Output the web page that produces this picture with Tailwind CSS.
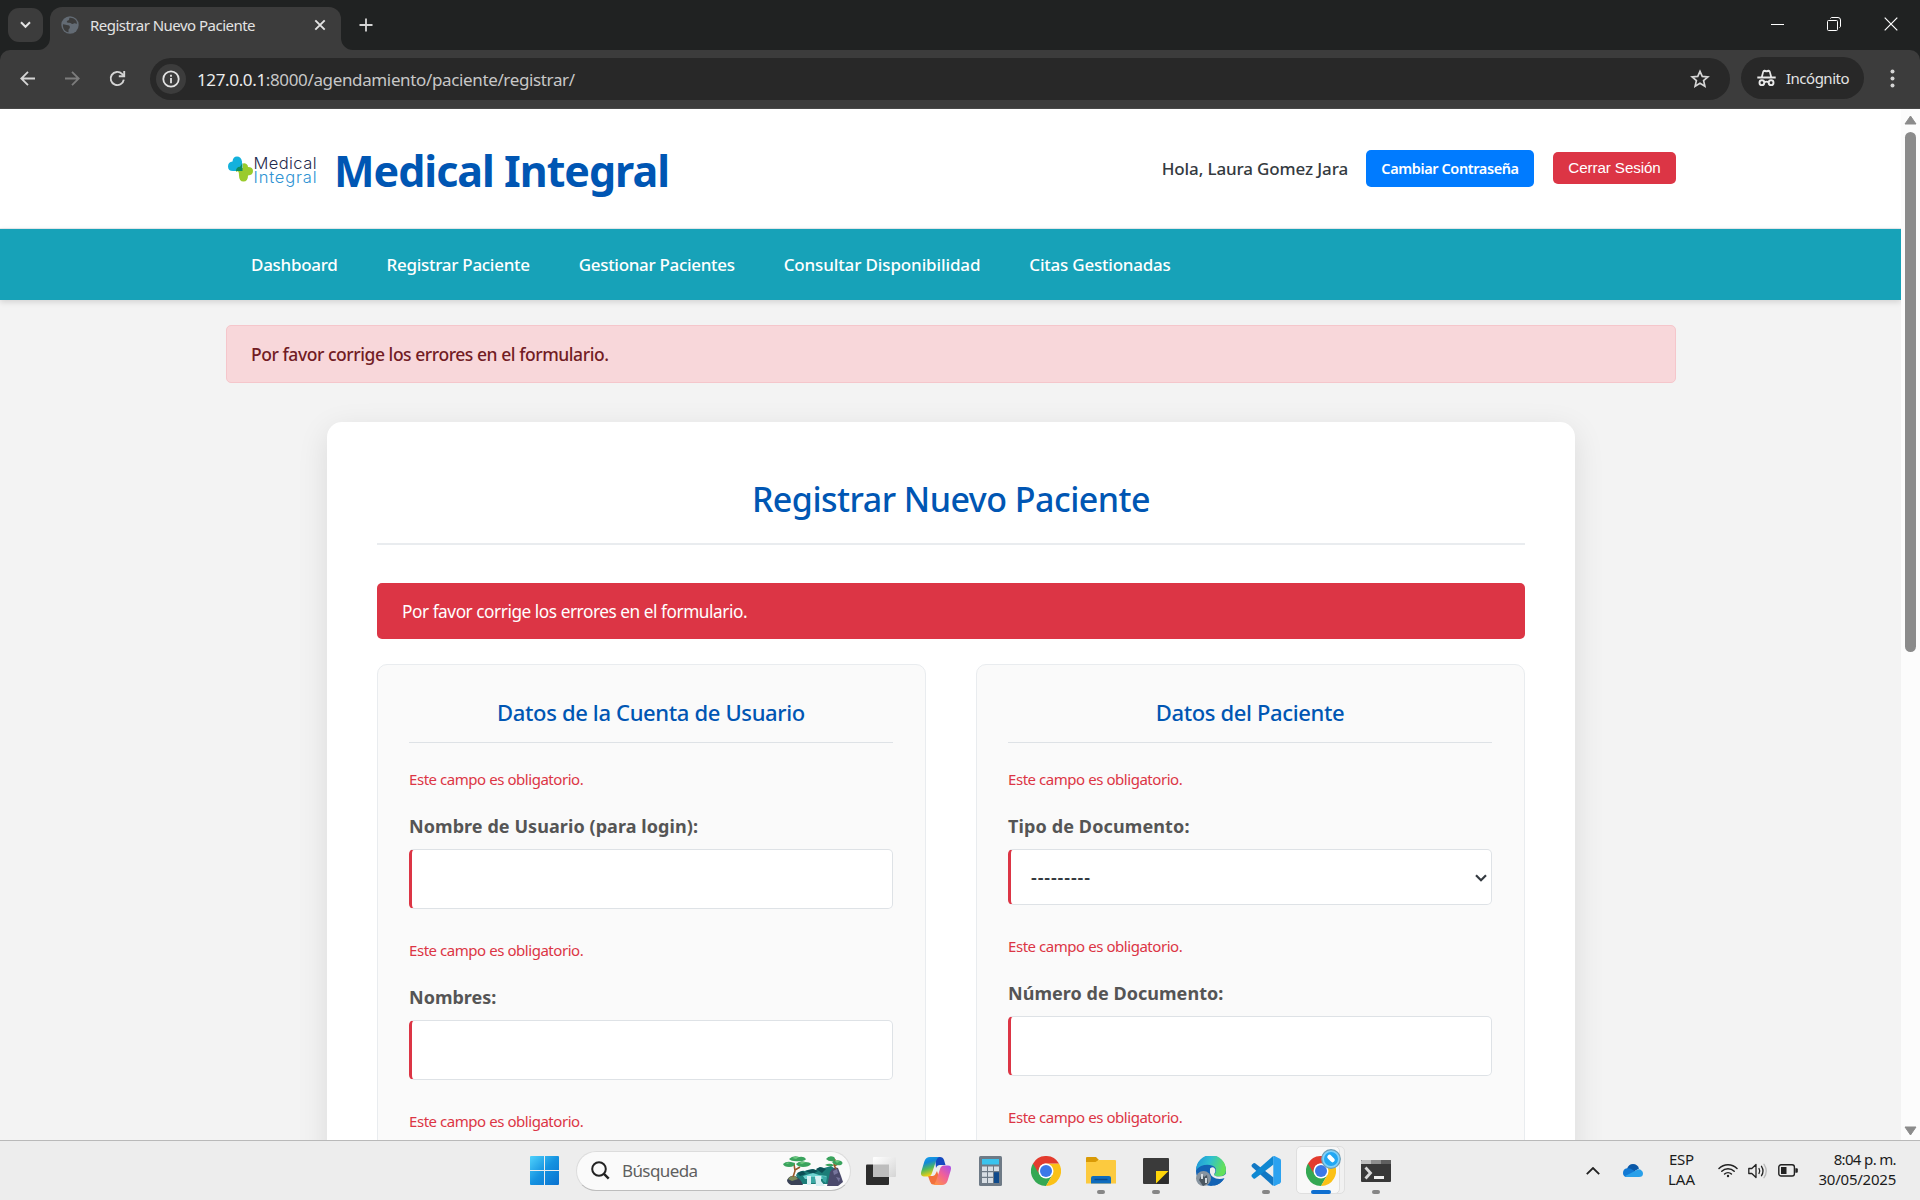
<!DOCTYPE html>
<html lang="es">
<head>
<meta charset="utf-8">
<title>Registrar Nuevo Paciente</title>
<script src="https://cdn.jsdelivr.net/npm/@tailwindcss/browser@4"></script>
</head>
<body class="flex h-[1200px] w-[1920px] flex-col overflow-hidden bg-[#f3f3f3] font-['Noto_Sans','Open_Sans',sans-serif]">

<!-- shared symbols -->
<svg class="hidden">
  <symbol id="chrome" viewBox="0 0 48 48">
    <path fill="#34a853" d="M24 24 3.2 12A24 24 0 0 0 24 48l10.4-18z"/>
    <path fill="#fbc116" d="M24 48A24 24 0 0 0 44.8 12H24l10.4 18z"/>
    <path fill="#e33b2e" d="M3.2 12A24 24 0 0 1 44.8 12H24a12 12 0 0 0-10.4 18z"/>
    <circle cx="24" cy="24" r="12" fill="#fff"/>
    <circle cx="24" cy="24" r="9.6" fill="#3b78e7"/>
  </symbol>
</svg>

<!-- tab strip -->
<header class="flex h-[50px] shrink-0 items-start bg-[#202222] text-[#e3e3e3]">
  <div class="mt-2 ml-2 grid h-[34px] w-[35px] place-items-center rounded-[11px] bg-[#3c3c3c]">
    <svg width="11" height="8" viewBox="0 0 11 8" fill="none" stroke="#e3e3e3" stroke-width="2"><path d="M1 1.2 5.5 5.8 10 1.2"/></svg>
  </div>
  <div class="relative mt-[7px] ml-[7px] flex h-[43px] w-[291px] rounded-t-[12px] bg-[#3c3c3c]">
    <svg class="absolute bottom-0 -left-3" width="12" height="12"><path fill="#3c3c3c" d="M12 0v12H0A12 12 0 0 0 12 0z"/></svg>
    <svg class="absolute -right-3 bottom-0" width="12" height="12"><path fill="#3c3c3c" d="M0 0v12h12A12 12 0 0 1 0 0z"/></svg>
    <svg class="mt-[9px] ml-[11px]" width="18" height="18" viewBox="0 0 18 18"><circle cx="9" cy="9" r="8.7" fill="#636b74"/><path fill="#3c3c3c" d="M2 8.2c2.500 0 3 .8 5 1 1.700.2 2 1.200 1.800 2.600-.2 1-1.200 1.200-1.300 2.200v2.300C3.500 15.500 1.500 12 2 8.200zM8.500 1.800c-.6 1 .2 1.700-.8 2.400-1 .6-2 .3-1.900 1.600.1 1.100 1.400 1 2.700 1 1.200 0 1.700.9 2.800 1.200 1.200.2 1.900-.8 3-.6l1.700.4c0-3-2.500-6.300-7.500-6z"/></svg>
    <div class="ml-[11px] w-[215px] text-[15px] leading-9 tracking-[-0.52px] whitespace-nowrap">Registrar Nuevo Paciente</div>
    <svg class="mt-[12px] ml-[9px]" width="12" height="12" viewBox="0 0 12 12" stroke="#e3e3e3" stroke-width="1.900"><path d="M1.300 1.300l9.400 9.400M10.700 1.300l-9.400 9.400"/></svg>
  </div>
  <svg class="mt-[18px] ml-[18px]" width="14" height="14" viewBox="0 0 14 14" stroke="#d5d5d5" stroke-width="1.800"><path d="M7 .5v13M.5 7h13"/></svg>
  <div class="mt-[17px] mr-[22px] ml-auto flex items-center gap-[43px]">
    <div class="h-px w-[13px] bg-white"></div>
    <svg width="14" height="14" viewBox="0 0 14 14" fill="none" stroke="#fff"><rect x=".5" y="3.500" width="10" height="10" rx="1"/><path d="M3.500 1.500a1.500 1.500 0 0 1 1-1H11A2.500 2.500 0 0 1 13.500 3v6.500a1.500 1.500 0 0 1-1 1"/></svg>
    <svg width="14" height="14" viewBox="0 0 14 14" stroke="#fff" stroke-width="1.200"><path d="M.7.7l12.600 12.600M13.300.7.7 13.300"/></svg>
  </div>
</header>

<!-- toolbar -->
<div class="h-[59px] shrink-0 bg-[#202222]">
  <div class="flex h-full items-start rounded-t-[10px] border-b border-[#484848] bg-[#3c3c3c]">
    <svg class="mt-[21px] ml-5" width="15" height="15" viewBox="0 0 15 15" fill="none" stroke="#d5d5d5" stroke-width="1.800"><path d="M15 7.500H1.500M8 .8 1.300 7.500 8 14.200"/></svg>
    <svg class="mt-[21px] ml-[30px]" width="15" height="15" viewBox="0 0 15 15" fill="none" stroke="#7c7c7c" stroke-width="1.800"><path d="M0 7.500h13.500M7 .8l6.700 6.700L7 14.200"/></svg>
    <svg class="mt-[20px] ml-[29px]" width="17" height="17" viewBox="0 0 17 17" fill="none" stroke="#d5d5d5" stroke-width="1.900"><path d="M14.800 9.600A6.600 6.600 0 1 1 13 3.900L15 6"/><path d="M15.200 1v5.300H9.800"/></svg>
    <div class="mt-2 ml-[24px] flex h-[42px] w-[1580px] items-center rounded-full bg-[#282828] pr-[20px] pl-[6px]">
      <div class="grid size-[30px] place-items-center rounded-full bg-[#3c3c3c]">
        <svg width="18" height="18" viewBox="0 0 18 18" fill="none" stroke="#e3e3e3" stroke-width="1.800"><circle cx="9" cy="9" r="7.700"/><path d="M9 8v5.200M9 4.800v1.900"/></svg>
      </div>
      <div class="mt-0.5 ml-[11px] text-[17px] leading-10 tracking-[-0.36px] whitespace-nowrap text-[#c7c7c7]"><span class="text-[#ececec]">127.0.0.1</span>:8000/agendamiento/paciente/registrar/</div>
      <svg class="ml-auto" width="20" height="20" viewBox="0 0 20 20" fill="none" stroke="#d5d5d5" stroke-width="1.700"><path d="M10 2.300l2.250 5.150 5.600.5-4.250 3.700 1.270 5.500L10 14.250l-4.870 2.900 1.270-5.500-4.250-3.700 5.600-.5z"/></svg>
    </div>
    <div class="mt-[7px] ml-[11px] flex h-[42px] w-[123px] items-center rounded-full bg-[#282828] pl-[16px]">
      <svg width="19" height="18" viewBox="0 0 19 18"><path fill="#e8e8e8" d="M4 7.500 5.500 2.200Q6 .4 7.800.7l1.700.5 1.700-.5Q13 .4 13.500 2.200L15 7.500h-1.900L12 2.900l-2.500.4L7 2.900 5.900 7.500zM.3 7.400h18.400v2.200H.3z"/><g fill="none" stroke="#e8e8e8" stroke-width="1.900"><circle cx="4.900" cy="13.700" r="2.400"/><circle cx="14.100" cy="13.700" r="2.400"/><path d="M7.200 13.300q2.300-1.300 4.600 0"/></g></svg>
      <span class="ml-[10px] text-[15px] tracking-[-0.5px] text-[#e3e3e3]">Incógnito</span>
    </div>
    <svg class="mt-[19px] ml-[26px]" width="5" height="19" fill="#d5d5d5"><circle cx="2.500" cy="2.500" r="2"/><circle cx="2.500" cy="9.500" r="2"/><circle cx="2.500" cy="16.500" r="2"/></svg>
  </div>
</div>

<!-- viewport -->
<div class="flex h-[1031px] shrink-0 overflow-hidden">
  <div class="w-[1901px] overflow-hidden bg-[#f3f3f3]">
    <div class="h-[120px] border-b border-[#e9ecef] bg-white px-[226px]">
      <div class="flex h-[119px] w-[1450px] items-center">
        <svg class="mt-0.5 ml-px" width="92" height="34" viewBox="0 0 92 34">
          <path fill="#9acb2c" d="M9 15h7V10.500a3.700 3.700 0 0 1 5 3.500q5 0 5 4t-5 4.500q0 6-4.500 6T12 22.500 9 19z"/>
          <path fill="#14b1dc" d="M5.500 8.500Q6 3.500 10 3.500t5 5v4.500q0 5-5 5H6q-5 0-5-4.500t4.500-5z"/>
          <path fill="#0e8f5f" d="M9 18q0-4 4-4.200L15.500 10v8z"/>
          <text x="26.500" y="15.800" textLength="63" font-family="Inter" font-weight="300" font-size="16.500" fill="#1f2a4d">Medical</text>
          <text x="26.500" y="30.300" textLength="63" font-family="Inter" font-weight="300" font-size="16.500" fill="#2e93d3">Integral</text>
        </svg>
        <h1 class="mt-1 ml-[15px] text-[43px] leading-[60px] font-bold tracking-[-1.02px] whitespace-nowrap text-[#0056b3]">Medical Integral</h1>
        <div class="ml-auto flex items-center">
          <span class="text-[17px] font-medium tracking-[-0.13px] whitespace-nowrap text-[#343a40]">Hola, Laura Gomez Jara</span>
          <div class="ml-[18px] h-[37px] w-[168px] rounded-[5px] bg-[#007bff] text-center text-[14.500px] leading-[37px] font-semibold tracking-[-0.4px] whitespace-nowrap text-white">Cambiar Contraseña</div>
          <div class="mb-0.5 ml-[19px] h-[32px] w-[123px] rounded-[5px] bg-[#dc3545] text-center font-['Liberation_Sans',sans-serif] text-[15.200px] leading-8 tracking-[-0.1px] whitespace-nowrap text-white">Cerrar Sesión</div>
        </div>
      </div>
    </div>
    <nav class="relative flex h-[71px] items-center gap-[49px] bg-[#17a2b8] pl-[251px] text-[17px] font-medium whitespace-nowrap text-white shadow-[0_2px_6px_rgba(0,0,0,0.14)]">
      <a class="tracking-[-0.28px]">Dashboard</a>
      <a class="tracking-[-0.29px]">Registrar Paciente</a>
      <a class="tracking-[-0.31px]">Gestionar Pacientes</a>
      <a class="tracking-[-0.13px]">Consultar Disponibilidad</a>
      <a class="tracking-[-0.22px]">Citas Gestionadas</a>
    </nav>
    <div class="mt-[25px] ml-[226px] h-[58px] w-[1450px] rounded-[5px] border border-[#f5c6cb] bg-[#f8d7da] pl-[24px] text-[17.500px] leading-[57px] font-medium tracking-[-0.45px] text-[#721c24]">Por favor corrige los errores en el formulario.</div>

    <main class="mt-[39px] ml-[327px] h-[900px] w-[1248px] rounded-[15px] bg-white px-[50px] pt-[53px] shadow-[0_8px_31px_rgba(0,0,0,0.1)]">
      <h2 class="h-[70px] border-b-2 border-[#e9ecef] text-center text-[34px] leading-[48px] font-medium tracking-[-0.52px] text-[#0056b3]">Registrar Nuevo Paciente</h2>
      <div class="mt-[38px] h-[56px] rounded-[5px] bg-[#dc3545] pl-[25px] text-[17.250px] leading-[58px] tracking-[-0.46px] text-white">Por favor corrige los errores en el formulario.</div>
      <div class="mt-[25px] grid grid-cols-2 gap-[50px]">
        <section class="h-[600px] rounded-[10px] border border-[#e9ecef] bg-[#fafafa] pt-[31px] pr-8 pl-[31px]">
          <h3 class="h-[47px] border-b border-[#dee2e6] text-center text-[22px] leading-8 font-medium tracking-[-0.35px] text-[#0056b3]">Datos de la Cuenta de Usuario</h3>
          <p class="mt-[26px] text-[15px] leading-5 tracking-[-0.45px] text-[#dc3545]">Este campo es obligatorio.</p>
          <label class="mt-[27px] block text-[18px] leading-5 font-bold tracking-[0.07px] text-[#555]">Nombre de Usuario (para login):</label>
          <div class="mt-[13px] h-[60px] rounded-[5px] border border-l-3 border-[#dee2e6] border-l-[#dc3545] bg-white"></div>
          <p class="mt-[31px] text-[15px] leading-5 tracking-[-0.45px] text-[#dc3545]">Este campo es obligatorio.</p>
          <label class="mt-[27px] block text-[18px] leading-5 font-bold text-[#555]">Nombres:</label>
          <div class="mt-[13px] h-[60px] rounded-[5px] border border-l-3 border-[#dee2e6] border-l-[#dc3545] bg-white"></div>
          <p class="mt-[31px] text-[15px] leading-5 tracking-[-0.45px] text-[#dc3545]">Este campo es obligatorio.</p>
        </section>
        <section class="h-[600px] rounded-[10px] border border-[#e9ecef] bg-[#fafafa] pt-[31px] pr-8 pl-[31px]">
          <h3 class="h-[47px] border-b border-[#dee2e6] text-center text-[22px] leading-8 font-medium tracking-[-0.37px] text-[#0056b3]">Datos del Paciente</h3>
          <p class="mt-[26px] text-[15px] leading-5 tracking-[-0.45px] text-[#dc3545]">Este campo es obligatorio.</p>
          <label class="mt-[27px] block text-[18px] leading-5 font-bold tracking-[0.12px] text-[#555]">Tipo de Documento:</label>
          <div class="mt-[13px] flex h-[56px] items-center justify-between rounded-[5px] border border-l-3 border-[#dee2e6] border-l-[#dc3545] bg-white pr-[4px] pl-[20px]">
            <span class="text-[18px] font-semibold tracking-[0.89px] text-[#343a40]">---------</span>
            <svg class="mt-px" width="12" height="8" viewBox="0 0 12 8" fill="none" stroke="#343a40" stroke-width="2.200"><path d="M1 1.200l5 5 5-5"/></svg>
          </div>
          <p class="mt-[31px] text-[15px] leading-5 tracking-[-0.45px] text-[#dc3545]">Este campo es obligatorio.</p>
          <label class="mt-[27px] block text-[18px] leading-5 font-bold tracking-[0.04px] text-[#555]">Número de Documento:</label>
          <div class="mt-[13px] h-[60px] rounded-[5px] border border-l-3 border-[#dee2e6] border-l-[#dc3545] bg-white"></div>
          <p class="mt-[31px] text-[15px] leading-5 tracking-[-0.45px] text-[#dc3545]">Este campo es obligatorio.</p>
        </section>
      </div>
    </main>
  </div>
  <!-- scrollbar -->
  <div class="flex w-[19px] flex-col items-center bg-[#fcfcfc]">
    <svg class="mt-[6px]" width="13" height="10" viewBox="0 0 13 10"><path fill="#8b8b8b" stroke="#8b8b8b" stroke-linejoin="round" d="M6.500 1 12 9H1z"/></svg>
    <div class="mt-[7px] h-[520px] w-[11px] rounded-full bg-[#8b8b8b]"></div>
    <svg class="mt-auto mb-[4px]" width="13" height="10" viewBox="0 0 13 10"><path fill="#8b8b8b" stroke="#8b8b8b" stroke-linejoin="round" d="M6.500 9 12 1H1z"/></svg>
  </div>
</div>

<!-- taskbar -->
<footer class="flex h-[60px] shrink-0 items-center border-t border-[#b9b9b9] bg-[#ededed] text-[#1c1c1c]">
  <svg class="ml-[530px]" width="29" height="29" viewBox="0 0 29 29">
    <defs><linearGradient id="win" x1="0" y1="0" x2="1" y2="1" gradientUnits="userSpaceOnUse" gradientTransform="scale(29)"><stop stop-color="#4fd2fc"/><stop offset=".5" stop-color="#1592e0"/><stop offset="1" stop-color="#0a71cf"/></linearGradient></defs>
    <path fill="url(#win)" d="M1 0h13v14H0V1a1 1 0 0 1 1-1zM15 0h13a1 1 0 0 1 1 1v13H15zM0 15h14v14H1a1 1 0 0 1-1-1zM15 15h14v13a1 1 0 0 1-1 1H15z"/>
  </svg>
  <div class="ml-[17px] flex h-[40px] w-[275px] items-center rounded-full border border-b-[#bdbdbd] border-[#dcdcdc] bg-[#fafafa] pr-[7px] pl-[14px]">
    <svg width="19" height="19" viewBox="0 0 19 19" fill="none" stroke="#222" stroke-width="2"><circle cx="8" cy="8" r="6.800"/><path d="M12.700 12.700l5 5" stroke-width="2.400"/></svg>
    <span class="ml-[12px] text-[17px] tracking-[-0.6px] text-[#5f5f5f]">Búsqueda</span>
    <svg class="ml-auto" width="60" height="30" viewBox="0 0 60 30">
      <path fill="#1b7d78" d="M13 19q4-5 9-4 6-3 11-1 3-4 8-2l7-2 6 4v14H16z"/>
      <path fill="#0c4f55" d="M14 17l6-2 3 3-6 2zM22 15l8-2 5 2-5 3zM33 13l4-2 6 2-4 4z"/>
      <path fill="#6fd3cf" d="M20 20l10-3 6 2 8 1-3 3H22z"/>
      <path fill="#d9f0f3" d="M24 20h4v9h-4zM32 20h6v5l4 5h-9z"/>
      <path fill="#3aa8a4" d="M28 21h4v6h-4zM39 20l5 1-1 6-3-2z"/>
      <path fill="#3a4256" d="M4 24q3-5 8-4 6 3 8 9H8q-4-2-4-5z"/><path fill="#7d8b5a" d="M5 23q3-4 7-3l3 3-6 2z"/>
      <path fill="#4b4a6c" d="M47 16q4-6 8-4l3 8 2 6-5 4H44l1-4z"/><path fill="#77759c" d="M50 15l4-2 1 4-4 2zM53 21l4 1-1 4z"/>
      <path fill="none" stroke="#9a5a2c" stroke-width="1.600" d="M10 21l2-6-1-7M12 14l5-3M53 13l-2-4 1-6M51 10l4-2"/>
      <path fill="#3aa35d" d="M6 3q4-4 10-2 5-1 7 2-1 2-6 2-8 1-11-2zM0 8q3-3 8-2l4 1q0 4-6 4-5 0-6-3zM13 8q4-4 9-2 5 0 6 2-2 3-8 3-5 0-7-3zM43 3q3-4 8-2 2 2 0 4-5 1-8-2zM42 9q3-2 7-1 2 1 1 2-4 1-8-1zM49 6q4-3 9-1 3 2 0 4-6 1-9-3z"/>
      <path fill="#6cc77d" d="M9 2q4-2 7-1l-3 2zM16 7q4-2 7-1l-4 2zM52 5q3-1 5 0l-3 2zM3 7q2-1 4 0l-3 1z"/>
    </svg>
  </div>
  <div class="ml-[2px] flex h-full">
    <div class="grid w-[55px] place-items-center">
      <svg width="30" height="28" viewBox="0 0 30 28"><defs><linearGradient id="tv" x2="1" y2="1"><stop stop-color="#fff"/><stop offset="1" stop-color="#d5d5d5"/></linearGradient></defs><rect y="7.500" width="23" height="20.500" rx="1" fill="#2c2c2c"/><rect x="7" width="23" height="20" rx="1" fill="url(#tv)"/><rect x="7" y="7.500" width="16" height="12.500" fill="#bdbdbd"/></svg>
    </div>
    <div class="grid w-[55px] place-items-center">
      <svg width="30" height="28" viewBox="0 0 30 28">
        <defs><linearGradient id="cp1" x2=".3" y2="1"><stop stop-color="#18a5f0"/><stop offset=".35" stop-color="#1288d8"/><stop offset=".65" stop-color="#52b95b"/><stop offset="1" stop-color="#f3cf12"/></linearGradient><linearGradient id="cp2" x1="1" x2=".2" y2="1"><stop stop-color="#a44ff0"/><stop offset=".5" stop-color="#f0609a"/><stop offset="1" stop-color="#ff9146"/></linearGradient></defs>
        <path fill="#1449c0" d="M14 0h5q3 0 4 3l1.500 5H19q-3 0-4 3z"/>
        <path fill="#f2703c" d="M7 19h5q2 0 3-3l1-2 2 6-3 6q-1 1.500-3 1.500-2 0-3-3z"/>
        <path fill="url(#cp1)" d="M9 0h9q-2 1-3 4l-4 12q-1 3.500-4 3.500H3Q-1 19.500.3 14.500L3.500 4Q5 0 9 0z"/>
        <path fill="url(#cp2)" d="M21 28h-9q2-1 3-4l4-12q1-3.500 4-3.500h4q4 0 2.700 5L26.500 24Q25 28 21 28z"/>
      </svg>
    </div>
    <div class="grid w-[55px] place-items-center">
      <svg width="23" height="30" viewBox="0 0 23 30"><rect width="23" height="30" rx="1.500" fill="#6e7a86"/><path fill="#39c3ee" d="M3 3h17v5.500H3z"/><path fill="#d8dee4" d="M3 10.500h5v4.500H3zM9 10.500h5v4.500H9zM15 10.500h5v4.500h-5zM3 16.200h5v4.500H3zM9 16.200h5v4.500H9zM3 22h5v5H3zM9 22h5v5H9z"/><path fill="#0f4a8c" d="M15 16.200h5V27h-5z"/></svg>
    </div>
    <div class="grid w-[55px] place-items-center"><svg width="30" height="30"><use href="#chrome"/></svg></div>
    <div class="relative grid w-[55px] place-items-center">
      <svg width="30" height="27" viewBox="0 0 30 27"><path fill="#d99a06" d="M1 0h9l3 3h-1v4H0V1a1 1 0 0 1 1-1z"/><path fill="#fcca3f" d="M0 5h9.500l3-2H29a1 1 0 0 1 1 1v22.500H0z"/><path fill="#0f6cbd" d="M7 19h16a2 2 0 0 1 2 2v5.500H5V21a2 2 0 0 1 2-2z"/><path fill="#0b4a8a" d="M8.500 21.800h13v1.400h-13z"/></svg>
      <div class="absolute bottom-[6px] h-1 w-2 rounded-full bg-[#868686]"></div>
    </div>
    <div class="relative grid w-[55px] place-items-center">
      <svg width="26" height="26" viewBox="0 0 26 26"><rect width="26" height="26" rx="1" fill="#3a3a3a"/><path fill="#2c2c2c" d="M13 25.500 25.500 13V26H13z"/><path fill="#ffd60a" d="M13 13h12.500L13 25.500z"/></svg>
      <div class="absolute bottom-[6px] h-1 w-2 rounded-full bg-[#868686]"></div>
    </div>
    <div class="grid w-[55px] place-items-center">
      <svg width="30" height="30" viewBox="0 0 30 30">
        <defs><linearGradient id="ed" x2="1" y2=".3"><stop stop-color="#1d8fdc"/><stop offset=".5" stop-color="#2fc0d0"/><stop offset="1" stop-color="#62e05a"/></linearGradient></defs>
        <circle cx="15" cy="15" r="15" fill="#1363b5"/>
        <path fill="url(#ed)" d="M0 14A15 15 0 0 1 30 14q0 6.500-7 6.500-5 0-5-2 2-1.500 2-4.500 0-4-6-5Q5 8 0 14z"/>
        <path fill="#ededed" d="M14 12.500q3.500-3 5.300 1 .5 3-1.300 5 .5 2 5 2 4.500 0 7-2.500v3.500l-1.500 1q-8 2.500-12.500-1-3-4-2-9z"/>
        <path fill="#1363b5" d="M14 12.500q-1 6 3 8.500 4 3 11.500 1.300Q25 28 19 29.500 12 29 10 22t4-9.500z"/>
        <circle cx="7.500" cy="22.500" r="7.500" fill="#8794a0"/><path fill="#4a5660" d="M3 24l3-6 2 3 3-2 1 8-5 3z"/><path fill="#d4dbe0" d="M5 18h2v5H5zM9 22h2v5H9z"/>
      </svg>
    </div>
    <div class="relative grid w-[55px] place-items-center">
      <svg width="30" height="30" viewBox="0 0 30 30"><path fill="#1278c4" d="M1 8.500l1.500-1.200q.8-.5 1.600 0L22.500 21.500V29q-.5.500-1 .5L1 11q-1-1.200 0-2.500z"/><path fill="#0f88d2" d="M1 21l1.500 1.500q.8.500 1.600 0L22.500 8.500V.6q-.5-.5-1 0L1 18.500q-1 1.200 0 2.500z"/><path fill="#2ba2f0" d="M22.300.3q.5-.5 1.200-.2l5.500 2.700q1 .5 1 1.600v21.200q0 1.100-1 1.600l-5.500 2.700q-.7.300-1.200-.3z"/></svg>
      <div class="absolute bottom-[6px] h-1 w-2 rounded-full bg-[#868686]"></div>
    </div>
    <div class="relative grid w-[55px] place-items-center">
      <div class="absolute top-[5px] left-[8px] h-[48px] w-[44px] rounded-[5px] border border-[#dfdfdf] bg-[#f1f1f1]"></div>
      <div class="absolute top-[5px] left-[3px] h-[48px] w-[44px] rounded-[5px] border border-[#dfdfdf] bg-[#f8f8f8]"></div>
      <svg class="relative" width="30" height="30"><use href="#chrome"/></svg>
      <svg class="absolute top-[8px] left-[28px]" width="20" height="20" viewBox="0 0 20 20"><circle cx="10" cy="10" r="9.300" fill="#7fd0fb" stroke="#6c9cb4" stroke-width="1.200"/><circle cx="10" cy="10" r="7" fill="#22a7f2"/><path stroke="#fff" stroke-width="4.500" stroke-linecap="round" d="M8.500 8l3 3"/></svg>
      <div class="absolute bottom-[6px] h-1 w-5 rounded-full bg-[#0f6fd0]"></div>
    </div>
    <div class="relative grid w-[55px] place-items-center">
      <svg width="30" height="22" viewBox="0 0 30 22"><rect width="30" height="22" rx="1" fill="#383838"/><path fill="#bdbdbd" d="M1 0h9v4H0V1z"/><path fill="#8d8d8d" d="M10 0h10v4H10z"/><path fill="#5f5f5f" d="M20 0h9l1 1v3H20z"/><path fill="none" stroke="#d8d8d8" stroke-width="2.800" d="M4.500 7.500l5 5.500-5 5.500"/><path fill="#f0f0f0" d="M13 16h10v3H13z"/></svg>
      <div class="absolute bottom-[6px] h-1 w-2 rounded-full bg-[#868686]"></div>
    </div>
  </div>
  <div class="mr-[24px] ml-auto flex items-center">
    <svg width="14" height="8" viewBox="0 0 14 8" fill="none" stroke="#222" stroke-width="1.800"><path d="M.8 7.200 7 1l6.200 6.200"/></svg>
    <svg class="ml-[23px]" width="20" height="13" viewBox="0 0 20 13"><path fill="#0a58a8" d="M4 5q1.500-5 6-5t6 4.500l-5 3z"/><path fill="#1279d4" d="M0 9q0-4 4-4.700 3-.3 5 1.200l5 3L3 13Q0 12 0 9z"/><path fill="#29a0ea" d="M2 12l10-5q4-3 6.500-.5Q20 7.500 20 9.500q0 3.500-4 3.500H4q-1 0-2-1z"/></svg>
    <div class="mb-[3px] ml-[19px] flex w-[38px] flex-col text-center text-[15px] leading-5"><span class="tracking-[-0.22px]">ESP</span><span>LAA</span></div>
    <svg class="ml-[18px]" width="20" height="15" viewBox="0 0 20 15" fill="none" stroke="#222" stroke-width="1.500" stroke-linecap="round"><path d="M1 5.500a12.500 12.500 0 0 1 18 0M3.800 8.300a8.700 8.700 0 0 1 12.400 0M6.600 11a4.900 4.900 0 0 1 6.800 0"/><circle cx="10" cy="13" r="1.200" fill="#222" stroke="none"/></svg>
    <svg class="ml-[10px]" width="20" height="16" viewBox="0 0 20 16" fill="none" stroke="#222" stroke-width="1.300" stroke-linecap="round" stroke-linejoin="round"><path d="M.8 5.500h3L8 1.500v13l-4.200-4h-3z"/><path d="M11 5.500q1.500 2.500 0 5M13.500 3.300q3 4.700 0 9.400"/><path stroke="#b9b9b9" d="M16 1.300q4.500 6.700 0 13.400"/></svg>
    <svg class="ml-[10px]" width="20" height="13" viewBox="0 0 20 13"><rect x=".8" y=".8" width="15.600" height="11.200" rx="2.300" fill="none" stroke="#222" stroke-width="1.400"/><rect x="3" y="3" width="5.500" height="7" fill="#222"/><path fill="#222" d="M17.300 4.200h1.500a1 1 0 0 1 1 1v2.600a1 1 0 0 1-1 1h-1.500z"/></svg>
    <div class="mb-[4px] ml-[20px] flex flex-col text-right text-[15px] leading-5"><span class="tracking-[-0.65px]">8:04 p. m.</span><span class="tracking-[-0.23px]">30/05/2025</span></div>
  </div>
</footer>
</body>
</html>
